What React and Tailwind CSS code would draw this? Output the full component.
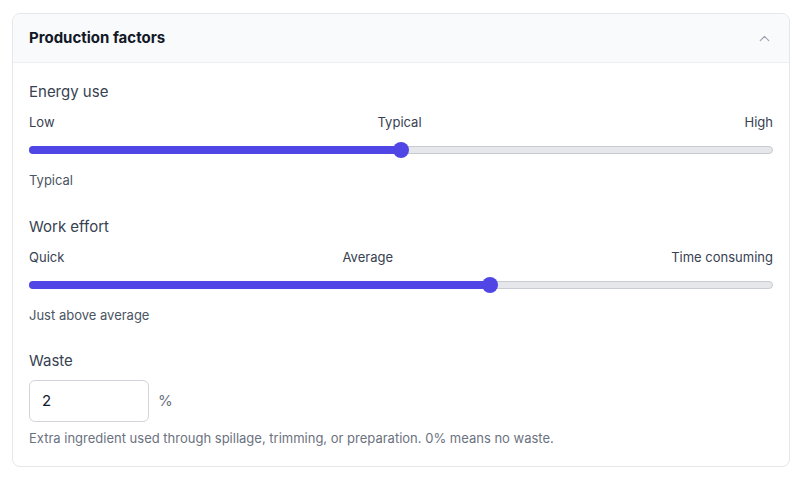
export default function App() {
  const Slider = ({ title, left, mid, right, pct, value }) => (
    <div className="flex flex-col">
      <div className="text-[15px] text-[#374151] leading-5">{title}</div>
      <div className="mt-[12px] flex justify-between text-[13px] text-[#374151] leading-4">
        <span>{left}</span><span>{mid}</span><span>{right}</span>
      </div>
      <div className="relative mt-[12px] h-4 flex items-center">
        <div className="w-full h-[8px] rounded-full bg-[#e5e7eb] border border-[#c8cbd0]" />
        <div className="absolute left-0 h-[8px] rounded-full bg-[#4f46e5]" style={{ width: pct + "%" }} />
        <div className="absolute w-4 h-4 rounded-full bg-[#4f46e5] -translate-x-1/2" style={{ left: pct + "%" }} />
      </div>
      <div className="mt-[14px] text-[13px] text-[#4b5563] leading-4">{value}</div>
    </div>
  );
  return (
    <div className="w-[804px] h-[481px] bg-white pt-[13px] px-[12px]" style={{ fontFamily: "Inter, sans-serif" }}>
      <div className="w-[778px] h-[454px] border border-[#e5e7eb] rounded-lg overflow-hidden">
        <div className="h-[49px] bg-[#f9fafb] border-b border-[#eceef1] flex items-center justify-between px-4">
          <span className="text-[15px] font-bold text-[#111827]">Production factors</span>
          <svg width="17" height="17" viewBox="0 0 24 24" fill="none" stroke="#9ca3af" strokeWidth="1.6" strokeLinecap="round" strokeLinejoin="round"><path d="m6 15 6-6 6 6" /></svg>
        </div>
        <div className="px-4 pt-[19px] flex flex-col">
          <Slider title="Energy use" left="Low" mid="Typical" right="High" pct={50} value="Typical" />
          <div className="h-[29px]" />
          <Slider title="Work effort" left="Quick" mid="Average" right="Time consuming" pct={62} value="Just above average" />
          <div className="h-[28px]" />
          <div className="text-[15px] text-[#374151] leading-5">Waste</div>
          <div className="mt-[9px] flex items-center gap-[9px]">
            <div className="w-[120px] h-[42px] border border-[#d1d5db] rounded-md flex items-center px-3 text-[15px] text-[#111827]">2</div>
            <span className="text-[15px] text-[#6b7280]">%</span>
          </div>
          <div className="mt-[8px] text-[13px] text-[#6b7280] leading-4">Extra ingredient used through spillage, trimming, or preparation. 0% means no waste.</div>
        </div>
      </div>
    </div>
  );
}
